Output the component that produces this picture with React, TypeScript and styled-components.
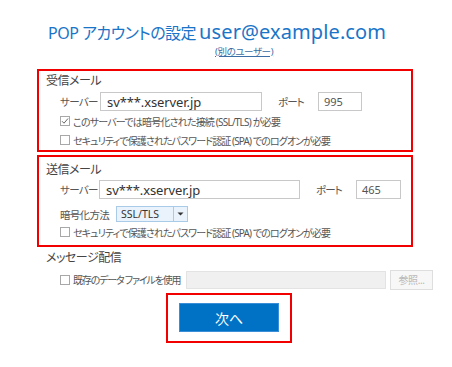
import React from 'react';
import styled, {createGlobalStyle} from 'styled-components';

const GlobalStyle = createGlobalStyle`
  html, body {
    margin: 0;
    padding: 0;
    background: #ffffff;
  }
  body {
    font-family: 'Noto Sans', 'Noto Sans CJK JP', sans-serif;
    font-feature-settings: 'palt';
    color: #444;
  }
`;

const Page = styled.div`
  width: 452px;
  height: 367px;
  padding-top: 19px;
  box-sizing: border-box;
`;

const Title = styled.div`
  display: flex;
  align-items: baseline;
  height: 26px;
  line-height: 26px;
  padding-left: 48px;
  color: #1a74c8;
  white-space: nowrap;
`;

const TitleJp = styled.span`
  font-size: 16px;
  letter-spacing: -0.5px;
  margin-right: 3px;
`;

const TitleMail = styled.span`
  font-size: 20px;
  letter-spacing: 0.1px;
`;

const UserLink = styled.a`
  display: block;
  margin: 1px 0 0 215px;
  height: 11px;
  line-height: 11px;
  font-size: 9.5px;
  letter-spacing: -0.4px;
  color: #3a6ea5;
  text-decoration: underline;
`;

const RedBox = styled.div<{$top: number; $pt: number; $pb: number}>`
  margin: ${p => p.$top}px 0 0 37px;
  width: 376px;
  box-sizing: border-box;
  border: 2px solid #f20000;
  padding: ${p => p.$pt}px 0 ${p => p.$pb}px 7px;
  display: flex;
  flex-direction: column;
`;

const Heading = styled.div<{$mt?: number}>`
  height: 18px;
  line-height: 18px;
  margin-top: ${p => p.$mt || 0}px;
  font-size: 12px;
  letter-spacing: -0.5px;
  color: #444;
`;

const Row = styled.div<{$mt?: number; $h?: number}>`
  display: flex;
  align-items: center;
  height: ${p => p.$h || 18}px;
  margin-top: ${p => p.$mt || 0}px;
  padding-left: 14px;
`;

const Label = styled.span<{$w: number}>`
  width: ${p => p.$w}px;
  flex: none;
  font-size: 10.5px;
  letter-spacing: -0.7px;
  color: #555;
  white-space: nowrap;
`;

const TextBox = styled.div<{$w: number; $big?: boolean}>`
  width: ${p => p.$w}px;
  height: 19px;
  box-sizing: border-box;
  border: 1px solid #c8c8c8;
  background: #fff;
  display: flex;
  align-items: center;
  padding-left: ${p => (p.$big ? 6 : 5)}px;
  font-size: ${p => (p.$big ? 13 : 11)}px;
  letter-spacing: ${p => (p.$big ? -0.1 : 0)}px;
  color: ${p => (p.$big ? '#333' : '#555')};
  flex: none;
`;

const PortLabel = styled.span<{$ml: number; $w: number}>`
  margin-left: ${p => p.$ml}px;
  width: ${p => p.$w}px;
  flex: none;
  font-size: 10.5px;
  letter-spacing: -0.9px;
  color: #555;
  white-space: nowrap;
`;

const Check = styled.span`
  width: 10px;
  height: 10px;
  box-sizing: border-box;
  border: 1px solid #a8a8a8;
  background: #fff;
  flex: none;
  margin-right: 3px;
  display: flex;
  align-items: center;
  justify-content: center;
`;

const CheckText = styled.span<{$w?: number; $ls?: number}>`
  ${p => (p.$w ? `width: ${p.$w}px; flex: none;` : '')}
  font-size: 10px;
  letter-spacing: ${p => p.$ls ?? -0.9}px;
  color: #555;
  white-space: nowrap;
`;

const Select = styled.div`
  display: flex;
  width: 72px;
  height: 16px;
  box-sizing: border-box;
  border: 1px solid #a9cbe8;
  background: #eaf3fb;
  flex: none;
`;

const SelectValue = styled.span`
  flex: 1;
  font-size: 10.5px;
  line-height: 14px;
  padding-left: 4px;
  color: #333;
`;

const SelectArrow = styled.span`
  width: 13px;
  border-left: 1px solid #a9cbe8;
  display: flex;
  align-items: center;
  justify-content: center;
`;

const Plain = styled.div`
  margin-left: 37px;
  padding-left: 9px;
  display: flex;
  flex-direction: column;
`;

const DisabledInput = styled.div`
  width: 200px;
  height: 18px;
  box-sizing: border-box;
  border: 1px solid #e3e3e3;
  background: #f0f0f0;
  flex: none;
`;

const BrowseButton = styled.div`
  width: 43px;
  height: 20px;
  margin-left: 4px;
  box-sizing: border-box;
  border: 1px solid #dedede;
  background: #f7f7f7;
  color: #b8b8b8;
  font-size: 10px;
  letter-spacing: -0.4px;
  display: flex;
  align-items: center;
  justify-content: center;
  flex: none;
`;

const ButtonFrame = styled.div`
  margin: 4px 0 0 166px;
  width: 126px;
  height: 50px;
  box-sizing: border-box;
  border: 2px solid #f20000;
  padding: 8px 0 0 11px;
`;

const NextButton = styled.button`
  width: 100px;
  height: 29px;
  border: 1px solid #3a8ed8;
  background: #0072c6;
  color: #fff;
  font-family: inherit;
  font-size: 14px;
  padding: 0;
  cursor: pointer;
`;

const CheckMark = () => (
  <svg width="8" height="8" viewBox="0 0 8 8">
    <path d="M1 4.2 L3 6.2 L7 1.5" fill="none" stroke="#666" strokeWidth="1" />
  </svg>
);

const Arrow = () => (
  <svg width="7" height="4" viewBox="0 0 7 4">
    <path d="M0.5 0.5 L6.5 0.5 L3.5 3.5 Z" fill="#333" />
  </svg>
);

export default function App() {
  return (
    <Page>
      <GlobalStyle />
      <Title>
        <TitleJp>POP アカウントの設定</TitleJp>
        <TitleMail>user@example.com</TitleMail>
      </Title>
      <UserLink>(別のユーザー)</UserLink>

      <RedBox $top={12} $pt={1} $pb={1}>
        <Heading>受信メール</Heading>
        <Row $mt={2} $h={19}>
          <Label $w={40}>サーバー</Label>
          <TextBox $w={162} $big>sv***.xserver.jp</TextBox>
          <PortLabel $ml={16} $w={40}>ポート</PortLabel>
          <TextBox $w={44}>995</TextBox>
        </Row>
        <Row $mt={1}>
          <Check>
            <CheckMark />
          </Check>
          <CheckText $ls={-0.8}>このサーバーでは暗号化された接続 (SSL/TLS) が必要</CheckText>
        </Row>
        <Row $mt={1}>
          <Check />
          <CheckText>セキュリティで保護されたパスワード認証 (SPA) でのログオンが必要</CheckText>
        </Row>
      </RedBox>

      <RedBox $top={3} $pt={4} $pb={4}>
        <Heading>送信メール</Heading>
        <Row $mt={1} $h={19}>
          <Label $w={39}>サーバー</Label>
          <TextBox $w={201} $big>sv***.xserver.jp</TextBox>
          <PortLabel $ml={16} $w={40}>ポート</PortLabel>
          <TextBox $w={45}>465</TextBox>
        </Row>
        <Row $mt={6}>
          <Label $w={56}>暗号化方法</Label>
          <Select>
            <SelectValue>SSL/TLS</SelectValue>
            <SelectArrow>
              <Arrow />
            </SelectArrow>
          </Select>
        </Row>
        <Row>
          <Check />
          <CheckText>セキュリティで保護されたパスワード認証 (SPA) でのログオンが必要</CheckText>
        </Row>
      </RedBox>

      <Plain>
        <Heading $mt={2}>メッセージ配信</Heading>
        <Row $mt={3} $h={19}>
          <Check />
          <CheckText $w={113} $ls={-1.2}>既存のデータ ファイルを使用</CheckText>
          <DisabledInput />
          <BrowseButton>参照...</BrowseButton>
        </Row>
      </Plain>

      <ButtonFrame>
        <NextButton>次へ</NextButton>
      </ButtonFrame>
    </Page>
  );
}
